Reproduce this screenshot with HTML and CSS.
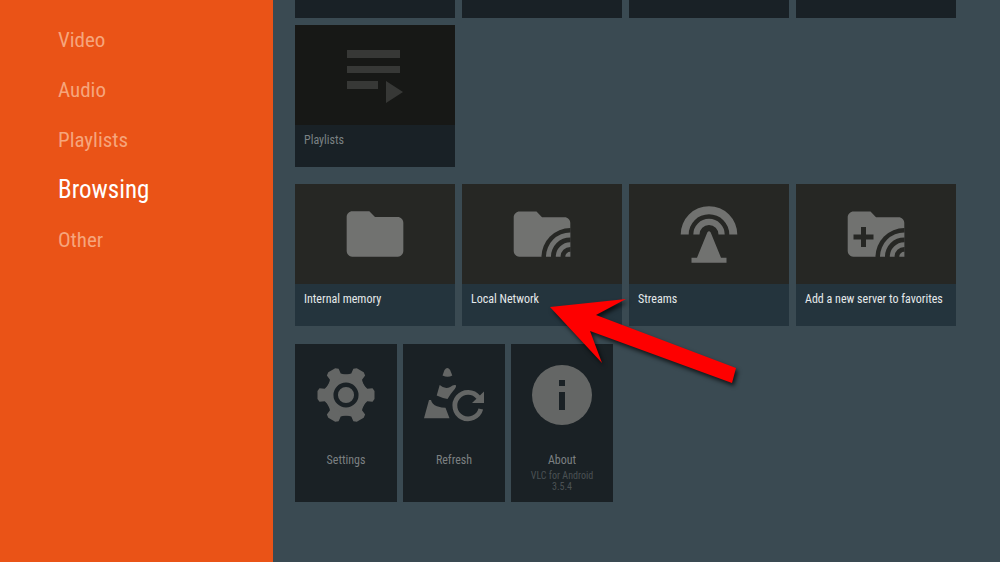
FILE: index.html
```html
<!DOCTYPE html>
<html lang="en">
<head>
  <meta charset="utf-8">
  <title>VLC for Android</title>
  <link rel="stylesheet" href="styles.css">
</head>
<body>
  <nav class="sidebar">
    <a href="#video">Video</a>
    <a href="#audio">Audio</a>
    <a href="#playlists">Playlists</a>
    <a href="#browsing" class="active">Browsing</a>
    <a href="#other">Other</a>
  </nav>

  <main class="content">
    <!-- Previous row, scrolled almost out of view -->
    <div class="row row-cut">
      <div class="card-end"></div>
      <div class="card-end"></div>
      <div class="card-end"></div>
      <div class="card-end"></div>
    </div>

    <div class="row" id="playlists">
      <button class="card dimmed">
        <span class="thumb">
          <svg class="icon" viewBox="0 0 68 68">
            <path d="M6 9h53v8H6zM6 25h53v7H6zM6 40h31v8H6zM45 40l17 11-17 11z"/>
          </svg>
        </span>
        <span class="title">Playlists</span>
      </button>
    </div>

    <div class="row" id="browsing">
      <button class="card">
        <span class="thumb">
          <svg class="icon" viewBox="0 0 24 24">
            <path d="M10 4H4c-1.1 0-2 .9-2 2v12c0 1.1.9 2 2 2h16c1.1 0 2-.9 2-2V8c0-1.1-.9-2-2-2h-8z"/>
          </svg>
        </span>
        <span class="title">Internal memory</span>
      </button>
      <button class="card">
        <span class="thumb">
          <svg class="icon" viewBox="0 0 68 68">
            <path d="M28.500 11.500H11.500C8.500 11.500 5.700 14 5.700 17v34c0 3 2.600 5.700 5.700 5.700H62.300V23c0-3-2.600-5.700-5.700-5.700H34z"/>
            <path class="cut" d="M33.500 57a29 29 0 0 1 29-29V57z"/>
            <path d="M38 56.700a24.500 24.500 0 0 1 24.300-24.300v5A19.300 19.300 0 0 0 43 56.700zM47.800 56.700a14.500 14.500 0 0 1 14.500-14.500v4.800A9.700 9.700 0 0 0 52.600 56.700zM57.300 56.700a5 5 0 0 1 5-5v5z"/>
          </svg>
        </span>
        <span class="title">Local Network</span>
      </button>
      <button class="card">
        <span class="thumb">
          <svg class="icon" viewBox="0 0 68 68">
            <path d="M5.700 34.500a28.300 28.300 0 0 1 56.600 0h-8a20.300 20.300 0 0 0-40.600 0z"/>
            <path d="M18.300 34.500a15.700 15.700 0 0 1 31.400 0h-6.200a9.500 9.500 0 0 0-19 0z"/>
            <path d="M32.300 32.500q1.700-2.500 3.400 0L46 57.700h5.500v5h-35v-5H22z"/>
          </svg>
        </span>
        <span class="title">Streams</span>
      </button>
      <button class="card">
        <span class="thumb">
          <svg class="icon" viewBox="0 0 68 68">
            <path d="M28.500 11.500H11.500C8.500 11.500 5.700 14 5.700 17v34c0 3 2.600 5.700 5.700 5.700H62.300V23c0-3-2.600-5.700-5.700-5.700H34z"/>
            <path class="cut" d="M19 27h5v7.500h7.500v5H24V47h-5v-7.500h-7.500v-5H19z"/>
            <path class="cut" d="M33.500 57a29 29 0 0 1 29-29V57z"/>
            <path d="M38 56.700a24.500 24.500 0 0 1 24.300-24.300v5A19.300 19.300 0 0 0 43 56.700zM47.800 56.700a14.500 14.500 0 0 1 14.500-14.500v4.800A9.700 9.700 0 0 0 52.600 56.700zM57.300 56.700a5 5 0 0 1 5-5v5z"/>
          </svg>
        </span>
        <span class="title">Add a new server to favorites</span>
      </button>
    </div>

    <div class="row row-small" id="other">
      <button class="tile">
        <svg class="icon" viewBox="-34 -34 68 68">
          <defs>
            <path id="tooth" d="M17-10.500l4.300 4.300 5.200-.600 2 2.800v8l-2 2.800-5.200-.600L17 10.500z"/>
          </defs>
          <circle r="20.800"/>
          <use href="#tooth"/>
          <use href="#tooth" transform="rotate(60)"/>
          <use href="#tooth" transform="rotate(120)"/>
          <use href="#tooth" transform="rotate(180)"/>
          <use href="#tooth" transform="rotate(240)"/>
          <use href="#tooth" transform="rotate(300)"/>
          <circle class="ring" r="10.300"/>
        </svg>
        <span class="name">Settings</span>
      </button>
      <button class="tile">
        <svg class="icon" viewBox="0 0 68 68">
          <path d="M22.500 14.500L24.500 9q2.800-4 5.600 0l2.200 5.500q-4.500 2.500-9.800 0z"/>
          <path d="M19.700 24q5 4.500 10.500 2 3-2.500 5.800-1.800.500 2-2.500 5.300T27.500 38q-5-.800-10.800-3.500z"/>
          <path d="M9 39h2q1 4.500 6 6.200 5 1.500 8.500 1.600l4 10.500H4z"/>
          <path class="arc" d="M58.500 36.500A13.200 13.200 0 1 0 60.800 48"/>
          <path d="M64 30.500V42H52z"/>
        </svg>
        <span class="name">Refresh</span>
      </button>
      <button class="tile">
        <svg class="icon" viewBox="0 0 68 68">
          <circle cx="34" cy="34" r="30"/>
          <path class="hole" d="M31 19h6v6h-6zM31 31h6v18h-6z"/>
        </svg>
        <span class="name">About</span>
        <span class="version">VLC for Android<br>3.5.4</span>
      </button>
    </div>

    <svg class="pointer" viewBox="0 0 200 96">
      <path d="M4 11L80 3 50 19l140 53-4 15L44 35l12 32z"/>
    </svg>
  </main>
</body>
</html>
```

FILE: styles.css
```css
* {
  box-sizing: border-box;
}
body {
  display: flex;
  min-height: 100vh;
  margin: 0;
  background-color: #3a4a52;
  font-family: "Roboto Condensed", "Liberation Sans Narrow", Roboto, sans-serif;
}
button {
  border: none;
  padding: 0;
  font: inherit;
  color: inherit;
  text-align: left;
  cursor: pointer;
}

/* Sidebar */
.sidebar {
  display: flex;
  flex: 0 0 273px;
  flex-direction: column;
  padding: 15px 0 0 58px;
  background-color: #ea5317;
}
.sidebar a {
  color: #f6a57c;
  font-size: 21px;
  line-height: 50px;
  text-decoration: none;
}
.sidebar a.active {
  color: #fff;
  font-size: 25px;
}

/* Rows */
.content {
  position: relative;
  flex: 1;
  min-width: 0;
  padding-left: 22px;
  overflow: hidden;
}
.row {
  display: flex;
  gap: 7px;
  margin-bottom: 17px;
}
.row-cut {
  margin-bottom: 7px;
}
.row-small {
  gap: 6px;
  margin-top: 18px;
}
.card-end {
  flex: 0 0 160px;
  height: 18px;
  background-color: #192126;
}

/* Cards */
.card {
  display: flex;
  flex: 0 0 160px;
  flex-direction: column;
  height: 142px;
  background-color: #24343d;
  color: #e4e9eb;
}
.thumb {
  display: flex;
  align-items: center;
  justify-content: center;
  width: 100%;
  height: 100px;
  background-color: #262724;
}
.title {
  padding: 7px 9px;
  font-size: 12px;
  line-height: 16px;
  white-space: nowrap;
}
.dimmed {
  background-color: #192126;
  color: #7b8184;
}
.dimmed .thumb {
  background-color: #171816;
}
.icon {
  width: 68px;
  height: 68px;
  fill: #717270;
}
.dimmed .icon {
  fill: #373836;
}
.icon .cut {
  fill: #262724;
}

/* Small tiles */
.tile {
  display: flex;
  flex: 0 0 102px;
  flex-direction: column;
  align-items: center;
  height: 158px;
  padding-top: 17px;
  background-color: #1a2125;
  color: #7c8082;
  text-align: center;
}
.tile .icon {
  flex-shrink: 0;
  fill: #646665;
}
.icon .ring {
  fill: none;
  stroke: #1a2125;
  stroke-width: 4.5;
}
.icon .arc {
  fill: none;
  stroke: #646665;
  stroke-width: 4.8;
}
.icon .hole {
  fill: #1a2125;
}
.name {
  margin-top: 23px;
  font-size: 12px;
  line-height: 16px;
}
.version {
  margin-top: 2px;
  color: #4b5154;
  font-size: 10px;
  line-height: 11px;
}

/* Arrow over the cards */
.pointer {
  position: absolute;
  top: 296px;
  left: 273px;
  width: 200px;
  height: 96px;
  fill: #fe0000;
  filter: drop-shadow(2px 3px 2px rgba(0, 0, 0, 0.7));
  pointer-events: none;
}
```
